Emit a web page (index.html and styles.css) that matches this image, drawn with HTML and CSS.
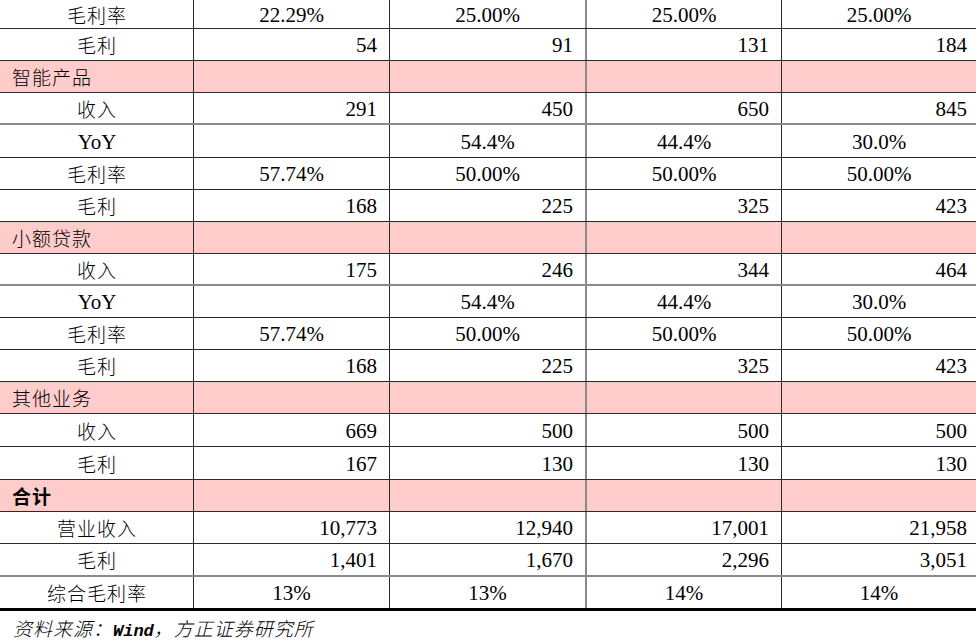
FILE: index.html
```html
<!DOCTYPE html>
<html lang="zh-CN">
<head>
<meta charset="utf-8">
<title>盈利预测</title>
<link rel="stylesheet" href="styles.css">
</head>
<body>
<div class="sheet">
  <div class="row h29"><div class="c lab">毛利率</div><div class="c mid">22.29%</div><div class="c mid">25.00%</div><div class="c mid">25.00%</div><div class="c mid">25.00%</div></div>
  <div class="row"><div class="c lab">毛利</div><div class="c num">54</div><div class="c num">91</div><div class="c num">131</div><div class="c num">184</div></div>
  <div class="row grp"><div class="c head">智能产品</div><div class="c"></div><div class="c"></div><div class="c"></div><div class="c"></div></div>
  <div class="row soft"><div class="c lab">收入</div><div class="c num">291</div><div class="c num">450</div><div class="c num">650</div><div class="c num">845</div></div>
  <div class="row h33"><div class="c lab en">YoY</div><div class="c mid"></div><div class="c mid">54.4%</div><div class="c mid">44.4%</div><div class="c mid">30.0%</div></div>
  <div class="row"><div class="c lab">毛利率</div><div class="c mid">57.74%</div><div class="c mid">50.00%</div><div class="c mid">50.00%</div><div class="c mid">50.00%</div></div>
  <div class="row"><div class="c lab">毛利</div><div class="c num">168</div><div class="c num">225</div><div class="c num">325</div><div class="c num">423</div></div>
  <div class="row grp"><div class="c head">小额贷款</div><div class="c"></div><div class="c"></div><div class="c"></div><div class="c"></div></div>
  <div class="row soft"><div class="c lab">收入</div><div class="c num">175</div><div class="c num">246</div><div class="c num">344</div><div class="c num">464</div></div>
  <div class="row"><div class="c lab en">YoY</div><div class="c mid"></div><div class="c mid">54.4%</div><div class="c mid">44.4%</div><div class="c mid">30.0%</div></div>
  <div class="row"><div class="c lab">毛利率</div><div class="c mid">57.74%</div><div class="c mid">50.00%</div><div class="c mid">50.00%</div><div class="c mid">50.00%</div></div>
  <div class="row"><div class="c lab">毛利</div><div class="c num">168</div><div class="c num">225</div><div class="c num">325</div><div class="c num">423</div></div>
  <div class="row grp"><div class="c head">其他业务</div><div class="c"></div><div class="c"></div><div class="c"></div><div class="c"></div></div>
  <div class="row h33"><div class="c lab">收入</div><div class="c num">669</div><div class="c num">500</div><div class="c num">500</div><div class="c num">500</div></div>
  <div class="row h33"><div class="c lab">毛利</div><div class="c num">167</div><div class="c num">130</div><div class="c num">130</div><div class="c num">130</div></div>
  <div class="row grp"><div class="c head bold">合计</div><div class="c"></div><div class="c"></div><div class="c"></div><div class="c"></div></div>
  <div class="row"><div class="c lab">营业收入</div><div class="c num">10,773</div><div class="c num">12,940</div><div class="c num">17,001</div><div class="c num">21,958</div></div>
  <div class="row h33 soft"><div class="c lab">毛利</div><div class="c num">1,401</div><div class="c num">1,670</div><div class="c num">2,296</div><div class="c num">3,051</div></div>
  <div class="row last"><div class="c lab">综合毛利率</div><div class="c mid">13%</div><div class="c mid">13%</div><div class="c mid">14%</div><div class="c mid">14%</div></div>
</div>
<p class="source">资料来源：<span class="latin">Wind</span>，方正证券研究所</p>
</body>
</html>
```
FILE: styles.css
```css
* { box-sizing: border-box; }
html, body { margin: 0; padding: 0; background: #fff; }
body {
  width: 978px;
  height: 642px;
  overflow: hidden;
  color: #000;
}
.sheet {
  width: 976px;
  display: flex;
  flex-direction: column;
}
.row {
  display: grid;
  grid-template-columns: 194px 196px 197px 195px 194px;
  height: 32px;
  border-bottom: 1px solid #2a2a2a;
}
.row.h29 { height: 29px; }
.row.h33 { height: 33px; }
.row.soft { border-bottom: 2px solid #8a8a8a; }
.row.last { height: 34px; border-bottom: 3px solid #000; }
.row.grp { background: #ffcccc; }
.c {
  display: flex;
  align-items: center;
  border-right: 1px solid #2a2a2a;
  min-width: 0;
}
.c:nth-child(3) { border-right: 2px solid #8a8a8a; }
.c:last-child { border-right: none; }
.lab {
  justify-content: center;
  font-family: "Noto Sans CJK SC", sans-serif;
  font-weight: 300;
  font-size: 19px;
  letter-spacing: 1px;
  padding-left: 1px;
}
.lab.en {
  font-family: "Liberation Serif", "Times New Roman", serif;
  font-weight: 400;
  font-size: 21px;
  letter-spacing: 0;
  padding-top: 2px;
}
.head {
  justify-content: flex-start;
  padding-left: 12px;
  font-family: "Noto Sans CJK SC", sans-serif;
  font-weight: 300;
  font-size: 19px;
  letter-spacing: 1px;
}
.head.bold { font-weight: 700; }
.num, .mid {
  font-family: "Liberation Serif", "Times New Roman", serif;
  font-size: 21px;
  padding-top: 2px;
}
.num { justify-content: flex-end; padding-right: 12px; }
.c:last-child.num { padding-right: 9px; }
.mid { justify-content: center; }
.source {
  margin: 0;
  padding: 5px 0 0 13px;
  font-family: "Noto Sans CJK SC", sans-serif;
  font-weight: 300;
  font-size: 19px;
  line-height: 24px;
  font-style: italic;
  letter-spacing: 1px;
}
.source .latin {
  font-family: "Liberation Mono", monospace;
  font-weight: 700;
  font-size: 17px;
  letter-spacing: 0;
}
```
